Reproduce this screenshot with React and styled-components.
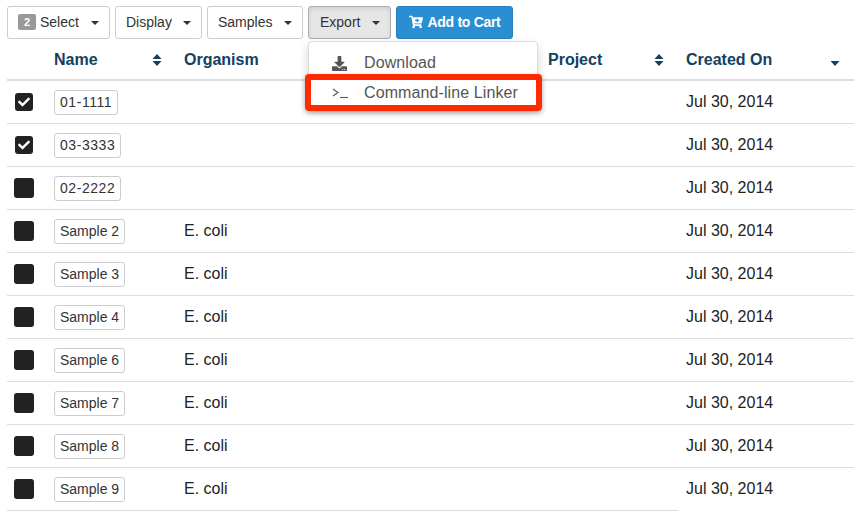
import React from "react";
import styled, { createGlobalStyle } from "styled-components";
import { FaCartPlus, FaDownload, FaCheck } from "react-icons/fa";

const GlobalStyle = createGlobalStyle`
  html, body {
    margin: 0;
    padding: 0;
    background: #fff;
    overflow: hidden;
  }
  body {
    font-family: "Liberation Sans", Arial, sans-serif;
    color: #222;
  }
`;

const Page = styled.div`
  position: relative;
  width: 860px;
  height: 517px;
  padding: 6px 6px 0 7px;
  box-sizing: border-box;
`;

const Toolbar = styled.div`
  display: flex;
  gap: 5px;
  height: 33px;
`;

const ToolButton = styled.div`
  display: flex;
  align-items: center;
  box-sizing: border-box;
  width: ${(props) => props.$width}px;
  height: 33px;
  padding-left: ${(props) => props.$pad || 10}px;
  padding-bottom: 2px;
  border: 1px solid ${(props) => (props.$active ? "#adadad" : "#ccc")};
  border-radius: 3px;
  background: ${(props) => (props.$active ? "#e6e6e6" : "#fff")};
  box-shadow: ${(props) =>
    props.$active ? "inset 0 2px 4px rgba(0,0,0,0.1)" : "none"};
  font-size: 14px;
  color: #333;
`;

const Caret = styled.span`
  width: 0;
  height: 0;
  margin-left: auto;
  margin-right: ${(props) => props.$right || 10}px;
  margin-top: 3px;
  border-top: 4px solid #333;
  border-left: 4px solid transparent;
  border-right: 4px solid transparent;
`;

const CountBadge = styled.span`
  display: inline-flex;
  align-items: center;
  justify-content: center;
  width: 18px;
  height: 16px;
  margin-right: 4px;
  border-radius: 2px;
  background: #999;
  color: #fff;
  font-size: 11px;
  font-weight: 700;
`;

const CartButton = styled.div`
  display: flex;
  align-items: center;
  justify-content: center;
  gap: 5px;
  box-sizing: border-box;
  width: 117px;
  height: 33px;
  padding-bottom: 2px;
  border: 1px solid #2a80bd;
  border-radius: 3px;
  background: #2a8fd2;
  color: #fff;
  font-size: 14px;
  font-weight: 700;
  letter-spacing: -0.3px;
`;

const Table = styled.table`
  width: 847px;
  margin-top: 2px;
  border-collapse: collapse;
  table-layout: fixed;
`;

const HeadCell = styled.th`
  height: 39px;
  padding: 0 8px;
  box-sizing: border-box;
  border-bottom: 2px solid #ddd;
  color: #14405f;
  font-size: 16px;
  font-weight: 700;
  text-align: left;
`;

const HeadInner = styled.div`
  display: flex;
  align-items: center;
  justify-content: space-between;
  padding-right: 6px;
`;

const Cell = styled.td`
  height: 43px;
  padding: 0 8px;
  box-sizing: border-box;
  border-bottom: 1px solid ${(props) => (props.$open ? "transparent" : "#ddd")};
  font-size: 16px;
  color: #222;
`;

const CheckBox = styled.span`
  display: flex;
  align-items: center;
  justify-content: center;
  width: ${(props) => (props.$checked ? 18 : 20)}px;
  height: ${(props) => (props.$checked ? 18 : 20)}px;
  margin-left: ${(props) => (props.$checked ? 0 : -1)}px;
  border-radius: 3px;
  background: #222;
  color: #fff;
  font-size: 12px;
`;

const NameTag = styled.span`
  display: inline-block;
  margin-top: 2px;
  padding: 4px 5px;
  border: 1px solid #ccc;
  border-radius: 3px;
  font-size: 14px;
  line-height: 15px;
  letter-spacing: ${(props) => (props.$code ? 0.55 : 0)}px;
  color: #333;
`;

const Menu = styled.div`
  position: absolute;
  top: 41px;
  left: 308px;
  width: 230px;
  height: 66px;
  box-sizing: border-box;
  padding-top: 6px;
  border: 1px solid #ddd;
  border-radius: 4px;
  background: #fff;
  box-shadow: 0 4px 10px rgba(0, 0, 0, 0.18);
`;

const MenuItem = styled.div`
  display: flex;
  align-items: center;
  height: 30px;
  padding-left: 23px;
  font-size: 16px;
  letter-spacing: 0.1px;
  color: #555;
`;

const MenuIcon = styled.span`
  display: flex;
  align-items: center;
  width: 32px;
  color: #555;
`;

const Highlight = styled.div`
  position: absolute;
  top: 74px;
  left: 305px;
  width: 237px;
  height: 37px;
  box-sizing: border-box;
  border: 6px solid #ff2a00;
  border-radius: 4px;
  box-shadow: 0 2px 5px rgba(0, 0, 0, 0.3);
`;

const SortIcon = ({ mode }) => (
  <svg width="10" height="14" viewBox="0 0 10 14" fill="#14405f">
    {mode !== "down" && <path d="M5 1 L9.5 6 H0.5 Z" />}
    <path d="M0.5 8 H9.5 L5 13 Z" />
  </svg>
);

const rows = [
  { name: "01-1111", checked: true, code: true },
  { name: "03-3333", checked: true, code: true },
  { name: "02-2222", code: true },
  { name: "Sample 2", organism: "E. coli" },
  { name: "Sample 3", organism: "E. coli" },
  { name: "Sample 4", organism: "E. coli" },
  { name: "Sample 6", organism: "E. coli" },
  { name: "Sample 7", organism: "E. coli" },
  { name: "Sample 8", organism: "E. coli" },
  { name: "Sample 9", organism: "E. coli" },
];

export default function App() {
  return (
    <Page>
      <GlobalStyle />
      <Toolbar>
        <ToolButton $width={103}>
          <CountBadge>2</CountBadge>
          Select
          <Caret />
        </ToolButton>
        <ToolButton $width={87}>
          Display
          <Caret />
        </ToolButton>
        <ToolButton $width={96}>
          Samples
          <Caret />
        </ToolButton>
        <ToolButton $width={83} $pad={11} $active>
          Export
          <Caret />
        </ToolButton>
        <CartButton>
          <FaCartPlus size={14} />
          Add to Cart
        </CartButton>
      </Toolbar>
      <Table>
        <colgroup>
          <col width="39" />
          <col width="130" />
          <col width="364" />
          <col width="138" />
          <col width="176" />
        </colgroup>
        <thead>
          <tr>
            <HeadCell />
            <HeadCell>
              <HeadInner>
                Name
                <SortIcon />
              </HeadInner>
            </HeadCell>
            <HeadCell>
              <HeadInner>Organism</HeadInner>
            </HeadCell>
            <HeadCell>
              <HeadInner>
                Project
                <SortIcon />
              </HeadInner>
            </HeadCell>
            <HeadCell>
              <HeadInner>
                Created On
                <SortIcon mode="down" />
              </HeadInner>
            </HeadCell>
          </tr>
        </thead>
        <tbody>
          {rows.map((row, i) => (
            <tr key={row.name}>
              <Cell>
                <CheckBox $checked={row.checked}>
                  {row.checked && <FaCheck />}
                </CheckBox>
              </Cell>
              <Cell>
                <NameTag $code={row.code}>{row.name}</NameTag>
              </Cell>
              <Cell>{row.organism}</Cell>
              <Cell />
              <Cell $open={i === rows.length - 1}>Jul 30, 2014</Cell>
            </tr>
          ))}
        </tbody>
      </Table>
      <Menu>
        <MenuItem>
          <MenuIcon>
            <FaDownload size={15} />
          </MenuIcon>
          Download
        </MenuItem>
        <MenuItem>
          <MenuIcon>
            <svg width="17" height="12" viewBox="0 0 17 12" fill="none" stroke="#555" strokeWidth="1.1">
              <path d="M1 2 L6 5.5 L1 9" />
              <path d="M8 10.5 H16" />
            </svg>
          </MenuIcon>
          Command-line Linker
        </MenuItem>
      </Menu>
      <Highlight />
    </Page>
  );
}
